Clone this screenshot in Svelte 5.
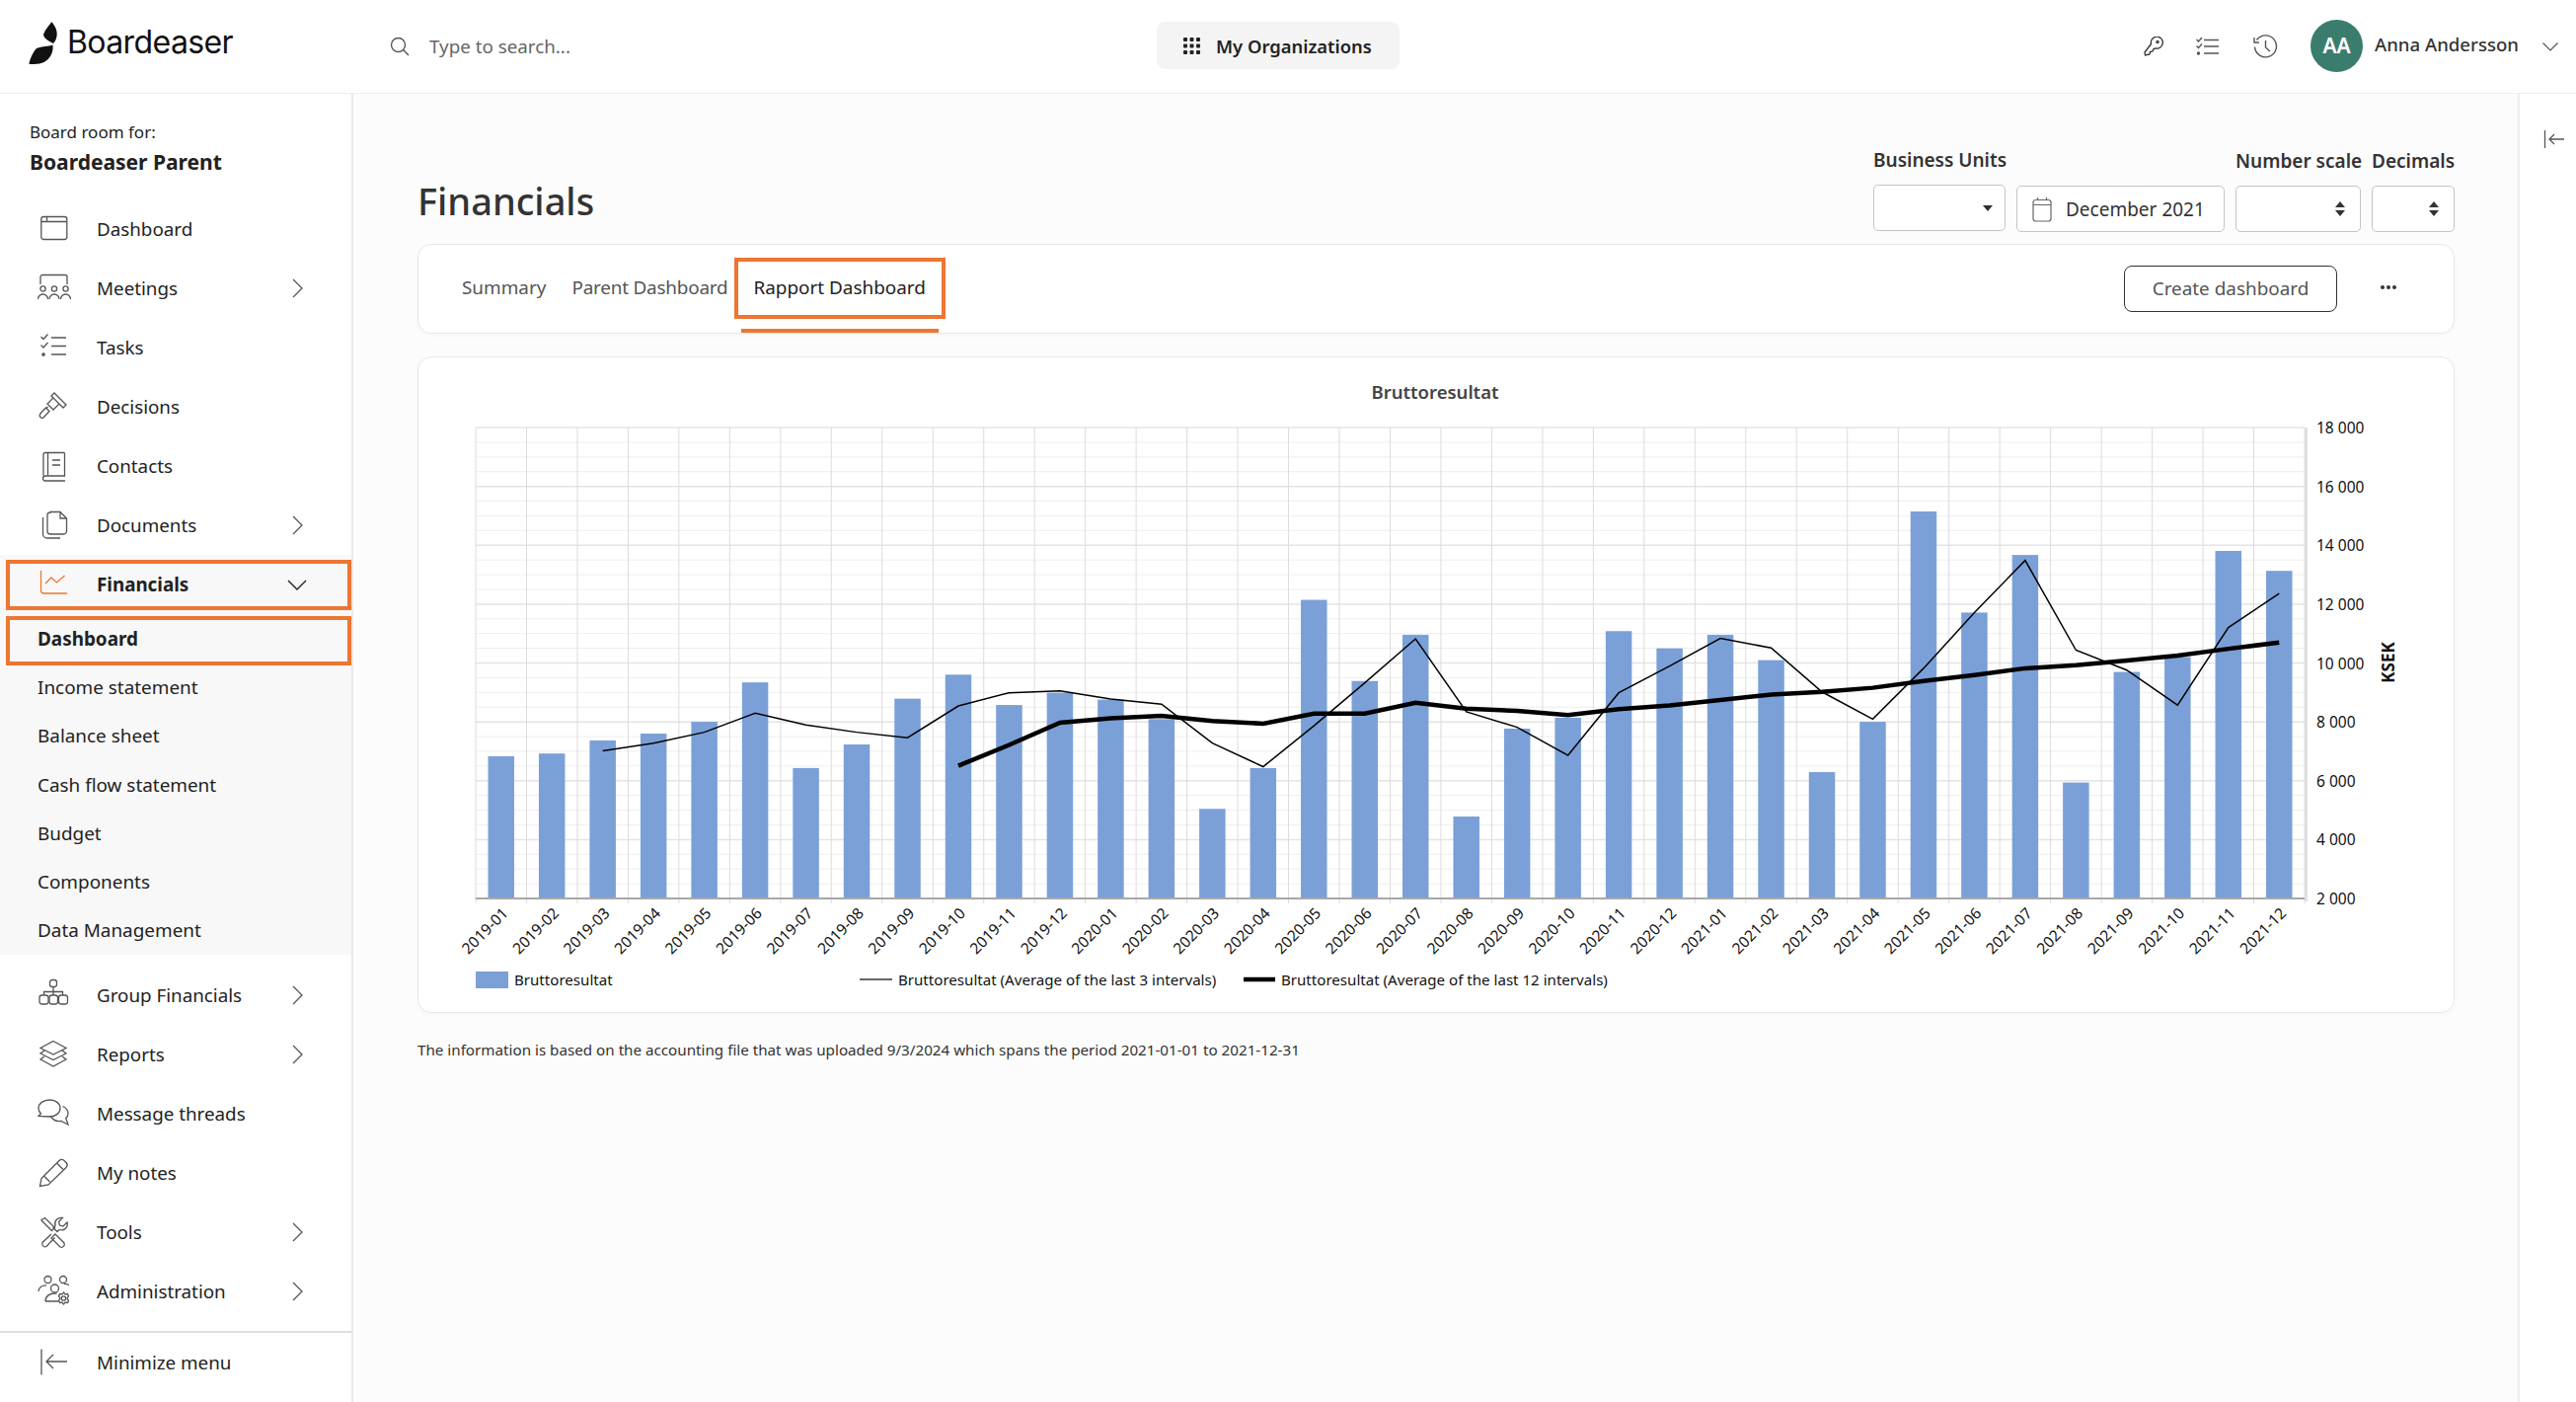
<script>
  const icons = {
    dashboard: '<rect x="3.8" y="4.5" width="26" height="23" rx="2.5"/><path d="M3.8 9.5h26M9.5 4.5v5"/>',
    meetings: '<path d="M3 13V5.5A2 2 0 0 1 5 3.5h23a2 2 0 0 1 2 2V13"/><circle cx="5.5" cy="17.5" r="2.6"/><circle cx="17" cy="17.5" r="2.6"/><circle cx="28.5" cy="17.5" r="2.6"/><path d="M.5 28a5 5 0 0 1 10 0M12 28a5 5 0 0 1 10 0M23.5 28a5 5 0 0 1 10 0"/>',
    tasks: '<path d="M3.5 6l2.5 2.5 4.5-5M3.5 14.5l2.5 2.5 4.5-5M14 7h15M14 15.5h15M14 24h15"/><circle cx="6" cy="24" r="1.2" fill="currentColor"/>',
    decisions: '<path d="M17 3l12 12-3 3L14 6zM16 8l-6 6 6 6 6-6M10.500 17l-2 2"/><path d="M5 21.500l3.500-3.500 3.500 3.500-6 6.500q-1.500 1-3-.5t-.5-3z"/>',
    contacts: '<path d="M6 26.500V5.500a2 2 0 0 1 2-2h18.500a1 1 0 0 1 1 1V27H8a2.500 2.500 0 0 0 0 5h20"/><path d="M10.500 3.500V26.500M15 11h8M15 16h8"/>',
    documents: '<path d="M13 3.500h10l6.500 6.500v13a3 3 0 0 1-3 3H13a3 3 0 0 1-3-3v-16a3 3 0 0 1 3-3z"/><path d="M23 3.500v6.500h6.500"/><path d="M5.500 9v17a4 4 0 0 0 4 4H23"/>',
    financials: '<path d="M3.500 3v20a3 3 0 0 0 3 3H30M8 16l6-6 5.500 5 8-7"/>',
    group: '<rect x="12.500" y="1.500" width="7" height="7" rx="2.500"/><path d="M16 8.500V17M6.500 17v-3.500h19V17"/><rect x="2" y="17" width="9" height="9" rx="2.500"/><rect x="12" y="17" width="8.500" height="9" rx="2.500"/><rect x="21.500" y="17" width="9" height="9" rx="2.500"/>',
    reports: '<path d="M16 3.500L29 10.500 16 17 3 10.500z"/><path d="M7 13l-4 3 13 6.500 13-6.500-4-3"/><path d="M7 19l-4 3 13 7 13-7-4-3"/>',
    messages: '<path d="M12.500 3C6 3 1 6.500 1 11.500c0 2.500 1 4 2.500 5.500L1 19.500l11 .500c6 0 11-3.500 11-8.500S18.500 3 12.500 3z"/><path d="M25.500 9.500c3.500 1.500 5.500 4 5.500 7 0 2-.8 3.800-2.300 5l2.300 6.500-7-3.500c-5 .5-9-1-10.500-5.500"/>',
    notes: '<path d="M4 22.500L22 4.500q2-2 4.500-.5l3 3q1.500 2-.5 4.500L11 29 2.500 30.500z"/><path d="M19.500 7l6.500 6.500M7 20.500l5.500 5.500"/>',
    tools: '<path d="M4 4.500L7.500 2.500l10 10-3 3-10-10zM14 19l-9 8.500a3 3 0 0 0 4 4l8.500-9"/><path d="M30 7l-4 4-3.500-1-1-3.500 4-4c-5-1-9 3-7.500 8L16 12.500l4 4 2-2c5 1.500 9.500-2.500 8-7.500z"/><path d="M18 19l9 9a3 3 0 0 1-4 4l-9-9z"/>',
    admin: '<circle cx="10.500" cy="5" r="3.500"/><circle cx="26" cy="5" r="3.500"/><circle cx="17.500" cy="14" r="4"/><path d="M1 17c0-4 4-6.500 8-6M32 10.500c-1.500-1-3-1.200-5-1.200M8 27c0-5 4-8 9.500-8h2M8 27h13"/><circle cx="26.500" cy="24" r="2.200"/><path d="M26.500 18l1.500 1.800 2.500-.3 1 2.200L30 24l1.500 2.300-1 2.200-2.500-.3-1.500 1.800-1.500-1.800-2.500.3-1-2.200L23 24l-1.500-2.300 1-2.200 2.500.3z"/>',
    minimize: '<path d="M4 3.500v26M30 16H10M16 9l-7 7 7 7"/>'
  };

  const topNav = [
    { label: "Dashboard", icon: "dashboard" },
    { label: "Meetings", icon: "meetings", more: true },
    { label: "Tasks", icon: "tasks" },
    { label: "Decisions", icon: "decisions" },
    { label: "Contacts", icon: "contacts" },
    { label: "Documents", icon: "documents", more: true }
  ];
  const subNav = ["Income statement", "Balance sheet", "Cash flow statement", "Budget", "Components", "Data Management"];
  const bottomNav = [
    { label: "Group Financials", icon: "group", more: true },
    { label: "Reports", icon: "reports", more: true },
    { label: "Message threads", icon: "messages" },
    { label: "My notes", icon: "notes" },
    { label: "Tools", icon: "tools", more: true },
    { label: "Administration", icon: "admin", more: true }
  ];

  // chart values are read off the picture, as distance from the crop top
  const toY = (z) => 360 + z / 2.178;
  const plot = { left: 482, right: 2335, top: 432, bottom: 909 };
  const step = (plot.right - plot.left) / 36;
  const cx = (i) => plot.left + step * (i + 0.5);

  const barTops = [882, 876, 847, 832, 806, 719, 908, 856, 755, 702, 769, 742, 757, 800, 998, 908, 537, 716, 614, 1015, 821, 797, 606, 644, 614, 670, 917, 806, 342, 565, 438, 940, 696, 663, 429, 473];
  const avg3 = [870, 853, 829, 787, 813, 829, 841, 771, 742, 738, 756, 767, 853, 905, 815, 720, 623, 784, 818, 880, 742, 683, 622, 643, 740, 800, 688, 565, 450, 648, 692, 769, 598, 523];
  const avg12 = [903, 857, 808, 798, 793, 804, 810, 788, 788, 764, 777, 782, 791, 778, 770, 758, 746, 740, 731, 716, 703, 688, 681, 671, 660, 645, 631];

  const months = [];
  for (const y of [2019, 2020, 2021]) {
    for (let m = 1; m <= 12; m++) months.push(`${y}-${String(m).padStart(2, "0")}`);
  }

  const avg3Points = avg3.map((z, i) => `${cx(i + 2)},${toY(z)}`).join(" ");
  const avg12Points = avg12.map((z, i) => `${cx(i + 9)},${toY(z)}`).join(" ");

  const yTicks = [18, 16, 14, 12, 10, 8, 6, 4, 2].map((v, i) => ({
    label: `${v} 000`,
    y: plot.top + i * ((plot.bottom - plot.top) / 8)
  }));
  const hLines = Array.from({ length: 32 }, (_, i) => ({
    y: plot.top + (i * (plot.bottom - plot.top)) / 32,
    major: i % 4 === 0
  }));
</script>

<div class="page">
  <header class="topbar">
    <div class="logo">
      <svg class="logo-mark" width="30" height="44" viewBox="0 0 30 44" fill="#111">
        <path d="M23.300.3C26 3 29 8 28.700 13c-.2 4-1.700 7-3.700 9-4-2-10-5-10-9.300C17 8 21 3 23.300.3z" />
        <path d="M.3 42.700C2 36 5 30 8 27c5-2 12-2 16.500-3.500.5 4.500-.5 8.500-2.500 11.500-4 6-10 9-21.700 7.700z" />
      </svg>
      <span class="logo-text">Boardeaser</span>
    </div>
    <div class="search">
      <svg width="20" height="20" viewBox="0 0 20 20" fill="none" stroke="#555" stroke-width="1.400">
        <circle cx="8.500" cy="8.500" r="7" />
        <path d="M13.500 13.500l5.500 5.500" />
      </svg>
      <span>Type to search...</span>
    </div>
    <button class="orgs">
      <svg width="17" height="17" viewBox="0 0 17 17" fill="#222">
        {#each [0, 6.500, 13] as y}
          {#each [0, 6.500, 13] as x}
            <rect x={x} y={y} width="4" height="4" rx="1" />
          {/each}
        {/each}
      </svg>
      My Organizations
    </button>
    <div class="user">
      <svg class="top-icon key" width="20" height="20" viewBox="0 0 20 20" fill="none" stroke="#333" stroke-width="1.300">
        <path d="M7.500 7.500a6 6 0 1 1 4.500 4.500l-2 .5-1 2.500-2.500.500-.5 2.500L1.500 19 1 16z" />
        <circle cx="14" cy="5.500" r="1.100" />
      </svg>
      <svg class="top-icon" width="24" height="20" viewBox="0 0 24 20" fill="none" stroke="#555" stroke-width="1.400">
        <path d="M.5 3l2 2 3.500-4M.5 9.500l2 2 3.500-4M8 3.500h15M8 10h15M8 17h15" />
        <circle cx="2.500" cy="17" r="1" fill="#555" />
      </svg>
      <svg class="top-icon" width="25" height="25" viewBox="0 0 25 25" fill="none" stroke="#555" stroke-width="1.400">
        <path d="M3.500 5.500A11 11 0 1 1 1.500 12.500M1 3v5h5M12.500 6v7l4.500 4" />
      </svg>
      <div class="avatar">AA</div>
      <span class="name">Anna Andersson</span>
      <svg width="16" height="9" viewBox="0 0 16 9" fill="none" stroke="#555" stroke-width="1.200">
        <path d="M.5.5L8 8l7.500-7.500" />
      </svg>
    </div>
  </header>

  <div class="body">
    <aside class="sidebar">
      <div class="room">
        <div class="room-label">Board room for:</div>
        <div class="room-name">Boardeaser Parent</div>
      </div>

      {#each topNav as item}
        <div class="nav-item">
          <svg class="nav-icon" viewBox="0 0 34 34" width="34" height="34">{@html icons[item.icon]}</svg>
          <span>{item.label}</span>
          {#if item.more}
            <svg class="chevron" width="11" height="20" viewBox="0 0 11 20" fill="none" stroke="#555" stroke-width="1.300">
              <path d="M1 1l9 9-9 9" />
            </svg>
          {/if}
        </div>
      {/each}

      <div class="subpanel">
        <div class="nav-item current">
          <svg class="nav-icon orange" viewBox="0 0 34 34" width="34" height="34">{@html icons.financials}</svg>
          <span>Financials</span>
          <svg class="chevron down" width="20" height="11" viewBox="0 0 20 11" fill="none" stroke="#222" stroke-width="1.400">
            <path d="M1 1l9 9 9-9" />
          </svg>
          <div class="mark mark-nav"></div>
        </div>
        <div class="sub-item active">
          Dashboard
          <div class="mark mark-sub"></div>
        </div>
        {#each subNav as label}
          <div class="sub-item">{label}</div>
        {/each}
      </div>

      <div class="bottom-nav">
        {#each bottomNav as item}
          <div class="nav-item">
            <svg class="nav-icon" viewBox="0 0 34 34" width="34" height="34">{@html icons[item.icon]}</svg>
            <span>{item.label}</span>
            {#if item.more}
              <svg class="chevron" width="11" height="20" viewBox="0 0 11 20" fill="none" stroke="#555" stroke-width="1.300">
                <path d="M1 1l9 9-9 9" />
              </svg>
            {/if}
          </div>
        {/each}
      </div>

      <div class="minimize">
        <div class="nav-item">
          <svg class="nav-icon" viewBox="0 0 34 34" width="34" height="34">{@html icons.minimize}</svg>
          <span>Minimize menu</span>
        </div>
      </div>
    </aside>

    <main class="main">
      <div class="title-row">
        <h1>Financials</h1>
        <div class="filters">
          <div class="filter units">
            <label>Business Units</label>
            <div class="control">
              <svg class="caret" width="10" height="6" viewBox="0 0 10 6" fill="#333"><path d="M0 0h10L5 6z" /></svg>
            </div>
          </div>
          <div class="filter date">
            <div class="control">
              <svg width="20" height="26" viewBox="0 0 20 26" fill="none" stroke="#666" stroke-width="1.200">
                <rect x="1" y="3.500" width="18" height="21.500" rx="2.500" />
                <path d="M1 8.500h18M5.500 1v3M14.500 1v3" />
              </svg>
              <span>December 2021</span>
            </div>
          </div>
          <div class="filter scale">
            <label>Number scale</label>
            <div class="control">
              <svg class="updown" width="10" height="15" viewBox="0 0 10 15" fill="#333"><path d="M5 0l5 6H0zM5 15L0 9h10z" /></svg>
            </div>
          </div>
          <div class="filter decimals">
            <label>Decimals</label>
            <div class="control">
              <svg class="updown" width="10" height="15" viewBox="0 0 10 15" fill="#333"><path d="M5 0l5 6H0zM5 15L0 9h10z" /></svg>
            </div>
          </div>
        </div>
      </div>

      <section class="card tabs">
        <div class="tab">Summary</div>
        <div class="tab parent">Parent Dashboard</div>
        <div class="tab active">
          Rapport Dashboard
          <div class="mark mark-tab"></div>
        </div>
        <button class="create">Create dashboard</button>
        <div class="dots"><i></i><i></i><i></i></div>
      </section>

      <section class="card chart">
        <svg width="2062" height="663" viewBox="424 361 2062 663">
          <text class="chart-title" x="1454" y="403" text-anchor="middle">Bruttoresultat</text>

          {#each hLines as line}
            <line x1={plot.left} x2={plot.right} y1={line.y} y2={line.y} stroke={line.major ? "#e4e4e4" : "#eeeeee"} stroke-width={line.major ? 1.500 : 1} />
          {/each}
          {#each Array(37) as _, i}
            <line x1={plot.left + step * i} x2={plot.left + step * i} y1={plot.top} y2={plot.bottom + 5} stroke="#dcdcdc" />
          {/each}

          {#each barTops as z, i}
            <rect x={cx(i) - 13.250} y={toY(z)} width="26.500" height={plot.bottom - toY(z)} fill="#7ba0d8" />
          {/each}

          <line x1={plot.left} x2={plot.right} y1={plot.bottom} y2={plot.bottom} stroke="#a8a8a8" stroke-width="2" />
          <line x1={plot.right + 1.500} x2={plot.right + 1.500} y1={plot.top} y2={plot.bottom + 3} stroke="#e0e0e0" stroke-width="3" />

          <polyline points={avg3Points} fill="none" stroke="#000" stroke-width="1.500" />
          <polyline points={avg12Points} fill="none" stroke="#000" stroke-width="4.500" />

          {#each months as month, i}
            <text class="tick" transform="translate({cx(i) + 8} 925) rotate(-45)" text-anchor="end">{month}</text>
          {/each}
          {#each yTicks as t}
            <text class="tick" x="2347" y={t.y + 6}>{t.label}</text>
          {/each}
          <text class="axis-label" transform="translate(2426 670) rotate(-90)" text-anchor="middle">KSEK</text>

          <rect x="482" y="983" width="33" height="17" fill="#7ba0d8" />
          <text class="legend" x="521" y="997">Bruttoresultat</text>
          <line x1="871" x2="904" y1="991" y2="991" stroke="#333" stroke-width="1.500" />
          <text class="legend" x="910" y="997">Bruttoresultat (Average of the last 3 intervals)</text>
          <line x1="1260" x2="1292" y1="991" y2="991" stroke="#000" stroke-width="4.500" />
          <text class="legend" x="1298" y="997">Bruttoresultat (Average of the last 12 intervals)</text>
        </svg>
      </section>

      <p class="note">The information is based on the accounting file that was uploaded 9/3/2024 which spans the period 2021-01-01 to 2021-12-31</p>
    </main>

    <div class="rail">
      <svg width="22" height="20" viewBox="0 0 22 20" fill="none" stroke="#555" stroke-width="1.300">
        <path d="M1.500 1v18M21 10H6M11 5l-5 5 5 5" />
      </svg>
    </div>
  </div>
</div>

<style>
  :global(body) {
    margin: 0;
    background: #fff;
    font-family: "Noto Sans", sans-serif;
    color: #222;
  }

  .page {
    width: 2610px;
    height: 1420px;
    overflow: hidden;
    display: flex;
    flex-direction: column;
  }

  .topbar {
    height: 94px;
    border-bottom: 1px solid #eeeeee;
    display: flex;
    align-items: center;
    padding: 0 18px 0 29px;
  }

  .logo {
    display: flex;
    align-items: center;
    gap: 9px;
    width: 366px;
    margin-top: -7px;
  }

  .logo-text {
    font-family: "Inter", sans-serif;
    font-size: 32px;
    letter-spacing: -0.6px;
    color: #111;
    margin-top: -2px;
  }

  .search {
    display: flex;
    align-items: center;
    gap: 20px;
    width: 777px;
    font-size: 18.800px;
    color: #666;
  }

  .orgs {
    width: 246px;
    height: 48px;
    margin-top: -2px;
    display: flex;
    align-items: center;
    gap: 16px;
    padding: 0 0 0 27px;
    border: none;
    border-radius: 8px;
    background: #f4f4f4;
    font-family: inherit;
    font-size: 18.400px;
    font-weight: 600;
    color: #222;
  }

  .user {
    margin-left: auto;
    display: flex;
    align-items: center;
  }

  .top-icon {
    margin-right: 34px;
  }

  .top-icon.key {
    margin-right: 33px;
  }

  .avatar {
    width: 53px;
    height: 53px;
    border-radius: 50%;
    background: #3a7d6f;
    color: #fff;
    font-weight: 600;
    font-size: 21px;
    display: flex;
    align-items: center;
    justify-content: center;
    margin: -2px 0 0 -1px;
  }

  .name {
    margin: -6px 24px 0 12px;
    font-size: 18.600px;
    font-weight: 500;
    color: #333;
  }

  .body {
    flex: 1;
    display: flex;
    min-height: 0;
  }

  .sidebar {
    width: 356px;
    flex-shrink: 0;
    border-right: 2px solid #e8e8e8;
    display: flex;
    flex-direction: column;
    background: #fff;
  }

  .room {
    padding: 27px 30px 23px;
  }

  .room-label {
    font-size: 17px;
    line-height: 24px;
  }

  .room-name {
    font-size: 21px;
    font-weight: 700;
    line-height: 30px;
    margin-top: 3px;
  }

  .nav-item {
    position: relative;
    height: 60px;
    display: flex;
    align-items: center;
    padding-left: 38px;
    font-size: 18.800px;
  }

  .nav-item span {
    margin-top: -1px;
  }

  .nav-icon {
    fill: none;
    stroke: #555;
    color: #555;
    stroke-width: 1.300;
    margin-right: 26px;
    flex-shrink: 0;
  }

  .nav-icon.orange {
    stroke: #ed7632;
  }

  .chevron {
    position: absolute;
    left: 296px;
    top: 20px;
  }

  .chevron.down {
    left: 291px;
    top: 25px;
  }

  .subpanel {
    background: #f8f8f8;
  }

  .current {
    font-weight: 700;
  }

  .sub-item {
    position: relative;
    height: 49.300px;
    padding-left: 38px;
    display: flex;
    align-items: center;
    font-size: 18.900px;
  }

  .sub-item.active {
    font-weight: 700;
  }

  .mark {
    position: absolute;
    box-sizing: border-box;
    border: 4px solid #ed7632;
    pointer-events: none;
  }

  .mark-nav {
    left: 6px;
    right: 0;
    top: 5px;
    bottom: 4px;
  }

  .mark-sub {
    left: 6px;
    right: 0;
    top: 2px;
    bottom: -3px;
  }

  .bottom-nav {
    margin-top: 11px;
  }

  .minimize {
    margin-top: 10px;
    border-top: 2px solid #dedede;
  }

  .main {
    flex: 1;
    min-width: 0;
    background: #fcfcfc;
    padding: 55px 64px 0 65px;
  }

  .title-row {
    display: flex;
    justify-content: space-between;
    align-items: flex-end;
    margin-bottom: 12px;
  }

  h1 {
    margin: 0 0 9px;
    font-size: 38px;
    font-weight: 500;
    line-height: 46px;
    color: #333;
  }

  .filters {
    display: flex;
    align-items: flex-end;
    gap: 11px;
  }

  .filter {
    display: flex;
    flex-direction: column;
  }

  .filter label {
    font-size: 19px;
    font-weight: 600;
    line-height: 24px;
    margin-bottom: 13px;
    color: #333;
    white-space: nowrap;
  }

  .control {
    box-sizing: border-box;
    height: 47px;
    background: #fff;
    border: 1.500px solid #c4c4c4;
    border-radius: 5px;
    display: flex;
    align-items: center;
    justify-content: flex-end;
    padding-right: 12px;
  }

  .units {
    width: 134px;
    margin-bottom: 1px;
  }

  .date {
    width: 211px;
  }

  .date .control {
    justify-content: flex-start;
    gap: 14px;
    padding-left: 15px;
    font-size: 19px;
    color: #333;
  }

  .scale {
    width: 127px;
  }

  .decimals {
    width: 84px;
  }

  .updown {
    margin-right: 3px;
  }

  .card {
    background: #fff;
    border: 1px solid #e8e8e8;
    border-radius: 14px;
    box-shadow: 0 1px 4px rgba(0, 0, 0, 0.03);
  }

  .tabs {
    height: 89px;
    display: flex;
    align-items: stretch;
    padding: 0 58px 0 31px;
  }

  .tab {
    position: relative;
    padding: 0 13px 3px;
    display: flex;
    align-items: center;
    font-size: 18.900px;
    color: #555;
    white-space: nowrap;
  }

  .tab.parent {
    letter-spacing: -0.2px;
  }

  .tab.active {
    color: #222;
    box-shadow: inset 0 -4px 0 #ed7632;
  }

  .mark-tab {
    left: -7px;
    right: -7px;
    top: 13px;
    bottom: 14px;
  }

  .create {
    margin: 21px 0 21px auto;
    padding-bottom: 3px;
    width: 216px;
    border: 1.500px solid #333;
    border-radius: 8px;
    background: #fff;
    font-family: inherit;
    font-size: 18.900px;
    color: #555;
  }

  .dots {
    display: flex;
    align-items: center;
    gap: 2px;
    margin: 0 0 3px 44px;
  }

  .dots i {
    width: 4px;
    height: 4px;
    border-radius: 50%;
    background: #333;
  }

  .chart {
    margin-top: 23px;
    height: 663px;
  }

  .chart svg {
    display: block;
  }

  .chart-title {
    font-size: 18.500px;
    font-weight: 600;
    fill: #444;
  }

  .tick {
    font-size: 15.500px;
    fill: #111;
  }

  .legend {
    font-size: 15.100px;
    fill: #111;
  }

  .axis-label {
    font-size: 17px;
    font-weight: 700;
    fill: #111;
  }

  .note {
    margin: 27px 0 0;
    font-size: 15.200px;
    line-height: 20px;
    color: #333;
  }

  .rail {
    flex-shrink: 0;
    border-left: 2px solid #eeeeee;
    display: flex;
    justify-content: center;
    padding-top: 36px;
    padding-left: 12px;
    width: 45px;
    background: #fff;
    align-items: flex-start;
  }
</style>
